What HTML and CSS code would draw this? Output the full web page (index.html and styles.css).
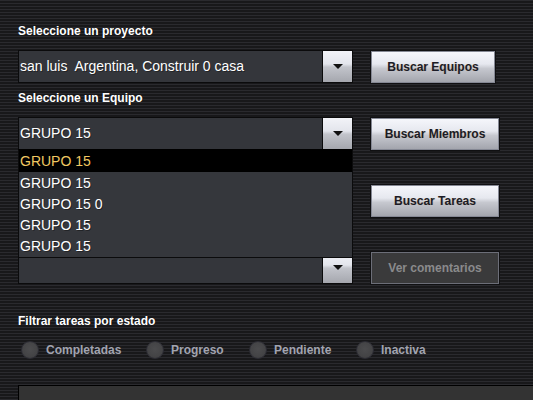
FILE: index.html
```html
<!DOCTYPE html>
<html lang="es">
<head>
<meta charset="utf-8">
<link rel="stylesheet" href="styles.css">
</head>
<body>
<div class="main">
  <div class="label label-first">Seleccione un proyecto</div>
  <div class="row">
    <div class="combo">
      <div class="combo-text">san luis&nbsp; Argentina, Construir 0 casa</div>
      <div class="combo-arrow"><span class="tri"></span></div>
    </div>
    <button class="btn btn-narrow">Buscar Equipos</button>
  </div>
  <div class="label label-second">Seleccione un Equipo</div>
  <div class="row row-team">
    <div class="combo">
      <div class="combo-text">GRUPO 15</div>
      <div class="combo-arrow"><span class="tri"></span></div>
    </div>
    <button class="btn">Buscar Miembros</button>
    <ul class="dropdown">
      <li class="item selected">GRUPO 15</li>
      <li class="item">GRUPO 15</li>
      <li class="item">GRUPO 15 0</li>
      <li class="item">GRUPO 15</li>
      <li class="item">GRUPO 15</li>
    </ul>
  </div>
  <div class="row row-tasks">
    <div class="spacer"></div>
    <button class="btn">Buscar Tareas</button>
  </div>
  <div class="row row-comments">
    <div class="combo">
      <div class="combo-text"></div>
      <div class="combo-arrow"><span class="tri"></span></div>
    </div>
    <button class="btn btn-disabled" disabled>Ver comentarios</button>
  </div>
  <div class="label label-filter">Filtrar tareas por estado</div>
  <div class="radios">
    <label class="radio r1"><span class="dot"></span>Completadas</label>
    <label class="radio r2"><span class="dot"></span>Progreso</label>
    <label class="radio r3"><span class="dot"></span>Pendiente</label>
    <label class="radio r4"><span class="dot"></span>Inactiva</label>
  </div>
  <div class="panel"></div>
</div>
</body>
</html>
```
FILE: styles.css
```css
html, body {
  margin: 0;
  padding: 0;
}
body {
  width: 533px;
  height: 400px;
  overflow: hidden;
  font-family: "Liberation Sans", Arial, sans-serif;
  background: repeating-linear-gradient(to bottom, #2a2a2e 0px, #2a2a2e 1px, #18181a 1px, #18181a 3px);
}
.main {
  padding: 24px 0 0 18px;
}
.label {
  font-weight: bold;
  font-size: 12px;
  line-height: 14px;
  height: 14px;
  color: #ffffff;
  text-shadow: 1px 0 0 rgba(0,0,0,0.4);
}
.label-first { margin-bottom: 12px; }
.label-second { margin-top: 8px; margin-bottom: 12px; }
.label-filter { margin-top: 30px; }
.row {
  display: flex;
  align-items: center;
  gap: 18px;
  height: 33px;
}
.row-team { position: relative; }
.row-tasks { margin-top: 35px; height: 32px; }
.row-comments { margin-top: 34px; }
.spacer { width: 335px; }
.combo {
  box-sizing: border-box;
  width: 335px;
  height: 33px;
  border: 1px solid #0b0b0c;
  display: flex;
  background: #34363b;
}
.combo-text {
  flex: 1;
  color: #ffffff;
  font-size: 14px;
  line-height: 31px;
  padding-left: 1px;
  white-space: nowrap;
  text-shadow: 1px 1px 0 rgba(0,0,0,0.35);
}
.combo-arrow {
  width: 29px;
  border-left: 1px solid #0b0b0c;
  background: linear-gradient(to bottom, #f2f3f8 0%, #e3e5ec 42%, #c2c4cb 52%, #a5a7ae 100%);
  display: flex;
  align-items: center;
  justify-content: center;
}
.tri {
  width: 0;
  height: 0;
  border-left: 5px solid transparent;
  border-right: 5px solid transparent;
  border-top: 5px solid #111;
}
.btn {
  box-sizing: border-box;
  width: 128px;
  height: 32px;
  margin: 0;
  padding: 0;
  border: 1px solid #858894;
  box-shadow: 0 0 0 1px #101012;
  background: linear-gradient(to bottom, #f5f6fb 0%, #e6e8ef 40%, #c6c8cf 55%, #a3a5ad 100%);
  font-family: "Liberation Sans", Arial, sans-serif;
  font-weight: bold;
  font-size: 12px;
  color: #1b1b26;
  text-shadow: 1px 0 0 rgba(200,140,60,0.25);
}
.btn-narrow { width: 124px; }
.btn-disabled {
  background: #3a3a3b;
  border: 1px solid #6c6e78;
  color: #8a8a8c;
  text-shadow: none;
}
.dropdown {
  position: absolute;
  left: 0;
  top: 32px;
  width: 335px;
  box-sizing: border-box;
  margin: 0;
  padding: 0 0 1px 0;
  list-style: none;
  background: #35373c;
  border-top: 1px solid #000;
  border-bottom: 1px solid #0b0b0c;
  border-left: 1px solid #0b0b0c;
  border-right: 1px solid #0b0b0c;
}
.item {
  height: 21px;
  line-height: 23px;
  font-size: 14px;
  color: #ffffff;
  padding-left: 1px;
  text-shadow: 1px 1px 0 rgba(0,0,0,0.35);
}
.item.selected {
  background: #000000;
  color: #f0c862;
  height: 22px;
}
.radios {
  display: flex;
  align-items: center;
  height: 20px;
  margin-top: 12px;
  padding-left: 3px;
}
.radio {
  display: flex;
  align-items: center;
  font-weight: bold;
  font-size: 12px;
  color: #a2a4b0;
}
.dot {
  box-sizing: border-box;
  width: 18px;
  height: 18px;
  border-radius: 50%;
  border: 1px solid #2c2c34;
  background: radial-gradient(circle at 50% 45%, #4c4c4e 0%, #444446 60%, #3a3a3c 100%);
  margin-right: 7px;
}
.r1 { width: 125px; }
.r2 { width: 103px; }
.r3 { width: 107px; }
.panel {
  margin-top: 25px;
  height: 20px;
  background: #333333;
  border-top: 1px solid #000;
  border-left: 1px solid #000;
}
```
